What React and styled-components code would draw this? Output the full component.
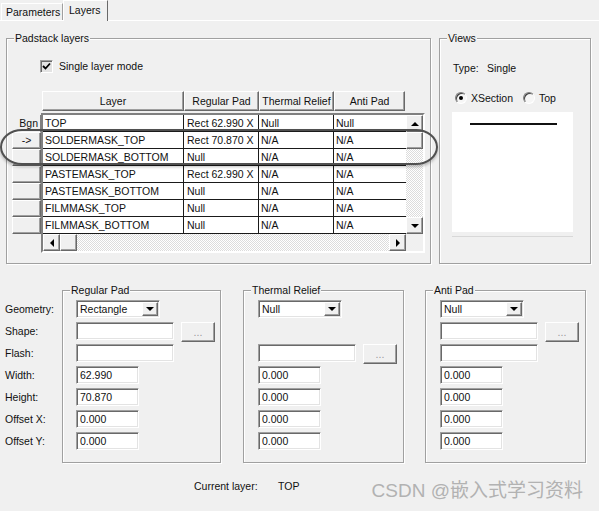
import React from 'react';
import styled, { createGlobalStyle, css } from 'styled-components';

const GlobalStyle = createGlobalStyle`
  html, body {
    margin: 0;
    padding: 0;
    background: #f0f0f0;
  }
  * {
    box-sizing: border-box;
  }
`;

const raised = css`
  border: 1px solid;
  border-color: #fff #696969 #696969 #fff;
  box-shadow: inset -1px -1px 0 #a0a0a0;
  background: #f0f0f0;
`;

const sunken = css`
  border: 1px solid;
  border-color: #a0a0a0 #fff #fff #a0a0a0;
  box-shadow: inset 1px 1px 0 #696969, inset -1px -1px 0 #e3e3e3;
`;

const checker = css`
  background: repeating-conic-gradient(#dcdcdc 0 25%, #fff 0 50%) 0 0 / 2px 2px;
`;

const Window = styled.div`
  position: relative;
  width: 599px;
  height: 511px;
  overflow: hidden;
  background: #f0f0f0;
  font-family: 'Liberation Sans', Arial, sans-serif;
  font-size: 10.5px;
  line-height: 13px;
  color: #111;
`;

const TabBar = styled.div`
  display: flex;
  align-items: flex-end;
  height: 21px;
  padding-left: 1px;
  border-bottom: 1px solid #fff;
`;

const Tab = styled.div`
  display: flex;
  align-items: center;
  border: 1px solid;
  border-bottom: none;
  border-color: #fff #696969 transparent #fff;
  background: #f0f0f0;
  ${(p) =>
    p.$active
      ? css`
          height: 21px;
          margin-bottom: -1px;
          width: 45px;
          padding-left: 5px;
          padding-bottom: 2px;
        `
      : css`
          height: 17px;
          width: 62px;
          padding-left: 4px;
          border-right-color: #a0a0a0;
        `}
`;

const TopSection = styled.div`
  display: flex;
  gap: 8px;
  margin-top: 17px;
  padding-left: 6px;
`;

const GroupBox = styled.div`
  position: relative;
  width: ${(p) => p.$w}px;
  height: ${(p) => p.$h}px;
  border: 1px solid #a0a0a0;
  box-shadow: inset 1px 1px 0 #fff, 1px 1px 0 #fff;
  flex-shrink: 0;
`;

const Legend = styled.span`
  position: absolute;
  top: -7px;
  left: 7px;
  padding: 0 1px;
  background: #f0f0f0;
`;

const PadstackBody = styled.div`
  padding: 21px 0 0 0;
`;

const CheckRow = styled.label`
  display: flex;
  align-items: center;
  gap: 6px;
  margin-left: 33px;
  height: 13px;
`;

const CheckBox = styled.span`
  display: flex;
  align-items: center;
  justify-content: center;
  width: 13px;
  height: 13px;
  ${sunken};
  background: #e4e4e4;
`;

const Grid = styled.div`
  margin: 18px 0 0 5px;
`;

const HeaderRow = styled.div`
  display: flex;
  padding-left: 30px;
  height: 20px;
`;

const HeaderCell = styled.div`
  width: ${(p) => p.$w}px;
  height: 20px;
  display: flex;
  align-items: center;
  justify-content: center;
  white-space: nowrap;
  ${raised};
`;

const GridBody = styled.div`
  display: flex;
  margin-top: 2px;
`;

const RowHeads = styled.div`
  display: flex;
  flex-direction: column;
  width: 29px;
  margin-top: 2px;
`;

const RowHead = styled.div`
  height: 17px;
  display: flex;
  align-items: center;
  ${(p) =>
    p.$flat
      ? css`
          justify-content: flex-end;
          padding-right: 2px;
          border-right: 1px solid #808080;
        `
      : css`
          justify-content: center;
          ${raised};
        `}
`;

const Frame = styled.div`
  width: 384px;
  height: 140px;
  border: 2px solid;
  border-color: #808080 #fff #fff #808080;
  box-shadow: inset 1px 1px 0 #404040;
  display: flex;
  flex-direction: column;
`;

const TableArea = styled.div`
  display: flex;
  height: 119px;
`;

const Rows = styled.div`
  width: 363px;
  background: #fff;
`;

const Row = styled.div`
  display: flex;
  height: 17px;
  border-bottom: 1px solid #1a1a1a;
`;

const Cell = styled.div`
  width: ${(p) => p.$w}px;
  padding-left: ${(p) => p.$pad || 2}px;
  border-right: ${(p) => (p.$last ? 'none' : '1px solid #1a1a1a')};
  line-height: 16px;
  white-space: nowrap;
  overflow: hidden;
  flex-shrink: 0;
`;

const VScroll = styled.div`
  width: 17px;
  display: flex;
  flex-direction: column;
  ${checker};
`;

const ScrollBtn = styled.div`
  width: 17px;
  height: 17px;
  display: flex;
  align-items: center;
  justify-content: center;
  flex-shrink: 0;
  ${raised};
`;

const Track = styled.div`
  flex: 1;
`;

const HScroll = styled.div`
  display: flex;
  height: 17px;
`;

const HTrack = styled.div`
  display: flex;
  width: 363px;
  ${checker};
`;

const Corner = styled.div`
  width: 17px;
  height: 17px;
  background: #f0f0f0;
`;

const Arrow = styled.span`
  width: 0;
  height: 0;
  ${(p) =>
    p.$dir === 'up' &&
    css`
      border-left: 4px solid transparent;
      border-right: 4px solid transparent;
      border-bottom: 4px solid #000;
    `}
  ${(p) =>
    p.$dir === 'down' &&
    css`
      border-left: 4px solid transparent;
      border-right: 4px solid transparent;
      border-top: 4px solid #000;
    `}
  ${(p) =>
    p.$dir === 'left' &&
    css`
      border-top: 4px solid transparent;
      border-bottom: 4px solid transparent;
      border-right: 4px solid #000;
    `}
  ${(p) =>
    p.$dir === 'right' &&
    css`
      border-top: 4px solid transparent;
      border-bottom: 4px solid transparent;
      border-left: 4px solid #000;
    `}
`;

const ViewsBody = styled.div`
  padding: 23px 0 0 13px;
`;

const TypeLine = styled.div`
  display: flex;
  height: 13px;
`;

const TypeKey = styled.span`
  width: 34px;
`;

const RadioRow = styled.div`
  display: flex;
  align-items: center;
  gap: 10px;
  margin: 17px 0 0 2px;
  height: 12px;
`;

const RadioOption = styled.label`
  display: flex;
  align-items: center;
  gap: 4px;
`;

const Radio = styled.span`
  width: 12px;
  height: 12px;
  border-radius: 50%;
  border: 1px solid;
  border-color: #808080 #fff #fff #808080;
  box-shadow: inset 1px 1px 0 #404040;
  background: #f6f6f6;
  display: flex;
  align-items: center;
  justify-content: center;
`;

const RadioDot = styled.span`
  width: 4px;
  height: 4px;
  border-radius: 50%;
  background: #000;
`;

const Preview = styled.div`
  width: 121px;
  height: 120px;
  margin: 8px 0 0 -1px;
  background: #fff;
  padding: 11px 0 0 18px;
`;

const PreviewLine = styled.div`
  width: 87px;
  height: 2px;
  background: #111;
`;

const Separator = styled.div`
  width: 121px;
  height: 1px;
  margin: 4px 0 0 -1px;
  background: #d8d8d8;
`;

const BottomSection = styled.div`
  display: flex;
  margin-top: 26px;
  padding-left: 5px;
`;

const LabelCol = styled.div`
  width: 57px;
  padding-top: 10px;
  display: flex;
  flex-direction: column;
`;

const FieldLabel = styled.div`
  height: 22px;
  padding-top: 3px;
  white-space: nowrap;
`;

const PadGroup = styled(GroupBox)`
  margin-left: ${(p) => p.$gap || 0}px;
  padding: 9px 0 0 ${(p) => p.$pl || 14}px;
  display: flex;
  flex-direction: column;
`;

const FieldRow = styled.div`
  display: flex;
  align-items: flex-start;
  height: 22px;
`;

const Select = styled.div`
  width: 84px;
  height: 18px;
  display: flex;
  align-items: center;
  justify-content: space-between;
  padding: 0 1px 0 3px;
  background: #fff;
  ${sunken};
`;

const DropBtn = styled.span`
  width: 16px;
  height: 14px;
  display: flex;
  align-items: center;
  justify-content: center;
  ${raised};
`;

const TextBox = styled.div`
  width: ${(p) => p.$w}px;
  height: 18px;
  padding: 2px 0 0 3px;
  background: #fff;
  ${sunken};
`;

const BrowseBtn = styled.div`
  width: 34px;
  height: 20px;
  margin-left: 7px;
  display: flex;
  align-items: center;
  justify-content: center;
  color: #9a9a9a;
  ${raised};
`;

const Footer = styled.div`
  display: flex;
  margin-top: 17px;
  padding-left: 194px;
`;

const FooterKey = styled.span`
  width: 84px;
`;

const Watermark = styled.div`
  position: absolute;
  right: 16px;
  bottom: 9px;
  font-family: 'Liberation Sans', 'Noto Sans CJK SC', sans-serif;
  font-size: 19px;
  line-height: 22px;
  color: #b2b2b2;
`;

const Annotation = styled.div`
  position: absolute;
  left: 0;
  top: 129px;
  width: 438px;
  height: 36px;
  border: 2px solid #505050;
  border-radius: 22px / 18px;
  box-shadow: 0 2px 3px rgba(0, 0, 0, 0.25);
  pointer-events: none;
`;

const columns = [142, 75, 75, 71];
const headers = ['Layer', 'Regular Pad', 'Thermal Relief', 'Anti Pad'];

const layers = [
  ['TOP', 'Rect 62.990 X', 'Null', 'Null'],
  ['SOLDERMASK_TOP', 'Rect 70.870 X', 'N/A', 'N/A'],
  ['SOLDERMASK_BOTTOM', 'Null', 'N/A', 'N/A'],
  ['PASTEMASK_TOP', 'Rect 62.990 X', 'N/A', 'N/A'],
  ['PASTEMASK_BOTTOM', 'Null', 'N/A', 'N/A'],
  ['FILMMASK_TOP', 'Null', 'N/A', 'N/A'],
  ['FILMMASK_BOTTOM', 'Null', 'N/A', 'N/A'],
];

const cellWidths = [141, 75, 75, 72];

const fieldLabels = ['Geometry:', 'Shape:', 'Flash:', 'Width:', 'Height:', 'Offset X:', 'Offset Y:'];

function Dropdown({ value }) {
  return (
    <Select>
      <span>{value}</span>
      <DropBtn>
        <Arrow $dir="down" />
      </DropBtn>
    </Select>
  );
}

function PadFields({ geometry, shapeRow, flashRow, values }) {
  return (
    <>
      <FieldRow>
        <Dropdown value={geometry} />
      </FieldRow>
      <FieldRow>
        {shapeRow && (
          <>
            <TextBox $w={98} />
            <BrowseBtn>...</BrowseBtn>
          </>
        )}
      </FieldRow>
      <FieldRow>
        {flashRow === 'browse' && (
          <>
            <TextBox $w={98} />
            <BrowseBtn>...</BrowseBtn>
          </>
        )}
        {flashRow === 'plain' && <TextBox $w={98} />}
      </FieldRow>
      {values.map((v, i) => (
        <FieldRow key={i}>
          <TextBox $w={63}>{v}</TextBox>
        </FieldRow>
      ))}
    </>
  );
}

export default function App() {
  return (
    <Window>
      <GlobalStyle />
      <TabBar>
        <Tab>Parameters</Tab>
        <Tab $active>Layers</Tab>
      </TabBar>

      <TopSection>
        <GroupBox $w={425} $h={226}>
          <Legend>Padstack layers</Legend>
          <PadstackBody>
            <CheckRow>
              <CheckBox>
                <svg width="9" height="9" viewBox="0 0 9 9">
                  <path d="M1 4 L3.5 6.5 L8 1.5" fill="none" stroke="#000" strokeWidth="1.8" />
                </svg>
              </CheckBox>
              Single layer mode
            </CheckRow>
            <Grid>
              <HeaderRow>
                {headers.map((h, i) => (
                  <HeaderCell key={h} $w={columns[i]}>
                    {h}
                  </HeaderCell>
                ))}
              </HeaderRow>
              <GridBody>
                <RowHeads>
                  <RowHead $flat>Bgn</RowHead>
                  <RowHead>-&gt;</RowHead>
                  {[0, 1, 2, 3, 4].map((i) => (
                    <RowHead key={i} />
                  ))}
                </RowHeads>
                <Frame>
                  <TableArea>
                    <Rows>
                      {layers.map((row) => (
                        <Row key={row[0]}>
                          {row.map((c, i) => (
                            <Cell key={i} $w={cellWidths[i]} $pad={i === 1 ? 3 : 2} $last={i === 3}>
                              {c}
                            </Cell>
                          ))}
                        </Row>
                      ))}
                    </Rows>
                    <VScroll>
                      <ScrollBtn>
                        <Arrow $dir="up" />
                      </ScrollBtn>
                      <ScrollBtn />
                      <Track />
                      <ScrollBtn>
                        <Arrow $dir="down" />
                      </ScrollBtn>
                    </VScroll>
                  </TableArea>
                  <HScroll>
                    <HTrack>
                      <ScrollBtn>
                        <Arrow $dir="left" />
                      </ScrollBtn>
                      <ScrollBtn />
                      <Track />
                      <ScrollBtn>
                        <Arrow $dir="right" />
                      </ScrollBtn>
                    </HTrack>
                    <Corner />
                  </HScroll>
                </Frame>
              </GridBody>
            </Grid>
          </PadstackBody>
        </GroupBox>

        <GroupBox $w={152} $h={226}>
          <Legend>Views</Legend>
          <ViewsBody>
            <TypeLine>
              <TypeKey>Type:</TypeKey>
              <span>Single</span>
            </TypeLine>
            <RadioRow>
              <RadioOption>
                <Radio>
                  <RadioDot />
                </Radio>
                XSection
              </RadioOption>
              <RadioOption>
                <Radio />
                Top
              </RadioOption>
            </RadioRow>
            <Preview>
              <PreviewLine />
            </Preview>
            <Separator />
          </ViewsBody>
        </GroupBox>
      </TopSection>

      <BottomSection>
        <LabelCol>
          {fieldLabels.map((l) => (
            <FieldLabel key={l}>{l}</FieldLabel>
          ))}
        </LabelCol>
        <PadGroup $w={159} $h={173} $pl={13}>
          <Legend>Regular Pad</Legend>
          <PadFields
            geometry="Rectangle"
            shapeRow
            flashRow="plain"
            values={['62.990', '70.870', '0.000', '0.000']}
          />
        </PadGroup>
        <PadGroup $w={161} $h={173} $gap={22}>
          <Legend>Thermal Relief</Legend>
          <PadFields
            geometry="Null"
            flashRow="browse"
            values={['0.000', '0.000', '0.000', '0.000']}
          />
        </PadGroup>
        <PadGroup $w={161} $h={173} $gap={21}>
          <Legend>Anti Pad</Legend>
          <PadFields
            geometry="Null"
            shapeRow
            flashRow="plain"
            values={['0.000', '0.000', '0.000', '0.000']}
          />
        </PadGroup>
      </BottomSection>

      <Footer>
        <FooterKey>Current layer:</FooterKey>
        <span>TOP</span>
      </Footer>

      <Watermark>CSDN @嵌入式学习资料</Watermark>
      <Annotation />
    </Window>
  );
}
